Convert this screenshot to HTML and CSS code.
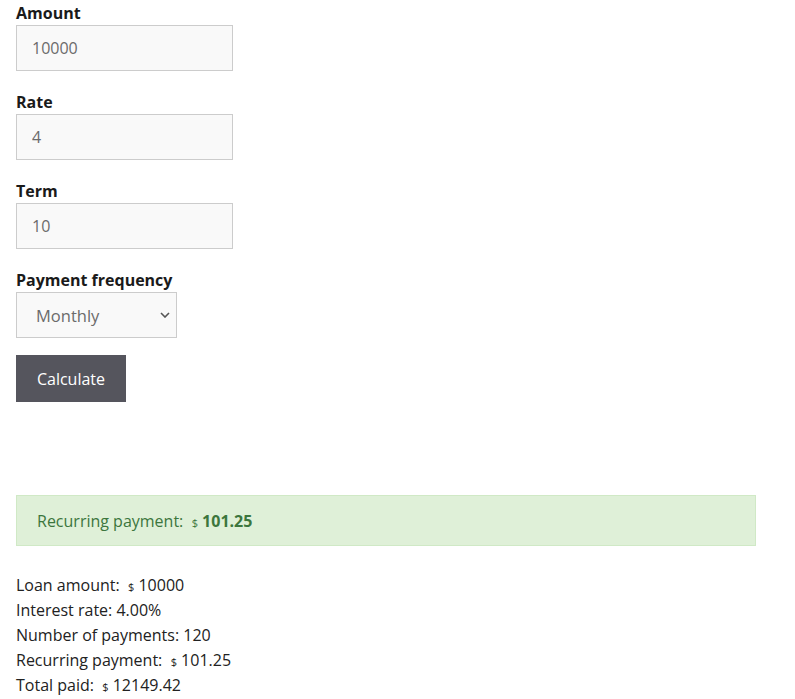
FILE: index.html
```html
<!DOCTYPE html>
<html>
<head>
<meta charset="utf-8">
<link rel="stylesheet" href="styles.css">
</head>
<body>
<div class="page">
  <form class="calc">
    <div class="group">
      <label class="label">Amount</label>
      <input class="field" type="text" value="10000">
    </div>
    <div class="group">
      <label class="label">Rate</label>
      <input class="field" type="text" value="4">
    </div>
    <div class="group">
      <label class="label">Term</label>
      <input class="field" type="text" value="10">
    </div>
    <div class="group">
      <label class="label">Payment frequency</label>
      <div class="select">
        <span class="select-text">Monthly</span>
        <svg class="chev" width="10" height="6" viewBox="0 0 10 6"><path d="M1 1l4 4 4-4" fill="none" stroke="#555" stroke-width="1.6"/></svg>
      </div>
    </div>
    <button class="btn" type="button">Calculate</button>
  </form>
  <div class="alert"><span>Recurring payment:&nbsp; <span class="cur">$</span> <strong>101.25</strong></span></div>
  <div class="results">
    <div class="row">Loan amount:&nbsp; <span class="cur">$</span> 10000</div>
    <div class="row">Interest rate: 4.00%</div>
    <div class="row">Number of payments: 120</div>
    <div class="row">Recurring payment:&nbsp; <span class="cur">$</span> 101.25</div>
    <div class="row">Total paid:&nbsp; <span class="cur">$</span> 12149.42</div>
  </div>
</div>
</body>
</html>
```
FILE: styles.css
```css
html, body { margin: 0; padding: 0; background: #fff; }
body { font-family: "Open Sans", "Noto Sans", sans-serif; font-size: 16px; color: #222; }
.page { padding: 1px 16px 0 16px; width: 740px; }
.calc { display: flex; flex-direction: column; align-items: flex-start; }
.group { display: flex; flex-direction: column; margin-bottom: 19px; }
.label { font-weight: 700; line-height: 24px; color: #1a1a1a; font-size: 16px; }
.field {
  box-sizing: border-box; width: 217px; height: 46px; border: 1px solid #cccccc;
  background: #f9f9f9; padding: 0 15px 1px 15px; font-family: inherit; font-size: 16px; color: #6b6b6b; outline: none; margin: 0;
}
.select {
  box-sizing: border-box; width: 161px; height: 46px; border: 1px solid #cccccc; background: #f9f9f9;
  display: flex; align-items: center; justify-content: space-between; padding: 0 4px 0 19px;
}
.select-text { font-size: 16.5px; color: #6b6b6b; }
.chev { margin-right: 2px; }
.btn {
  box-sizing: border-box; width: 110px; height: 47px; background: #55555d; color: #fff; border: none;
  font-family: inherit; font-size: 16px; padding: 0; margin-top: -2px;
}
.alert {
  box-sizing: border-box; margin-top: 93px; height: 51px; background: #dff0d8; border: 1px solid #d0e9c6;
  color: #3c763d; display: flex; align-items: center; padding-left: 20px; font-size: 16px;
}
.alert strong { font-weight: 700; }
.cur { font-size: 11px; line-height: 0; }
.results { margin-top: 27px; color: #222; }
.row { height: 25px; line-height: 25px; }
```
